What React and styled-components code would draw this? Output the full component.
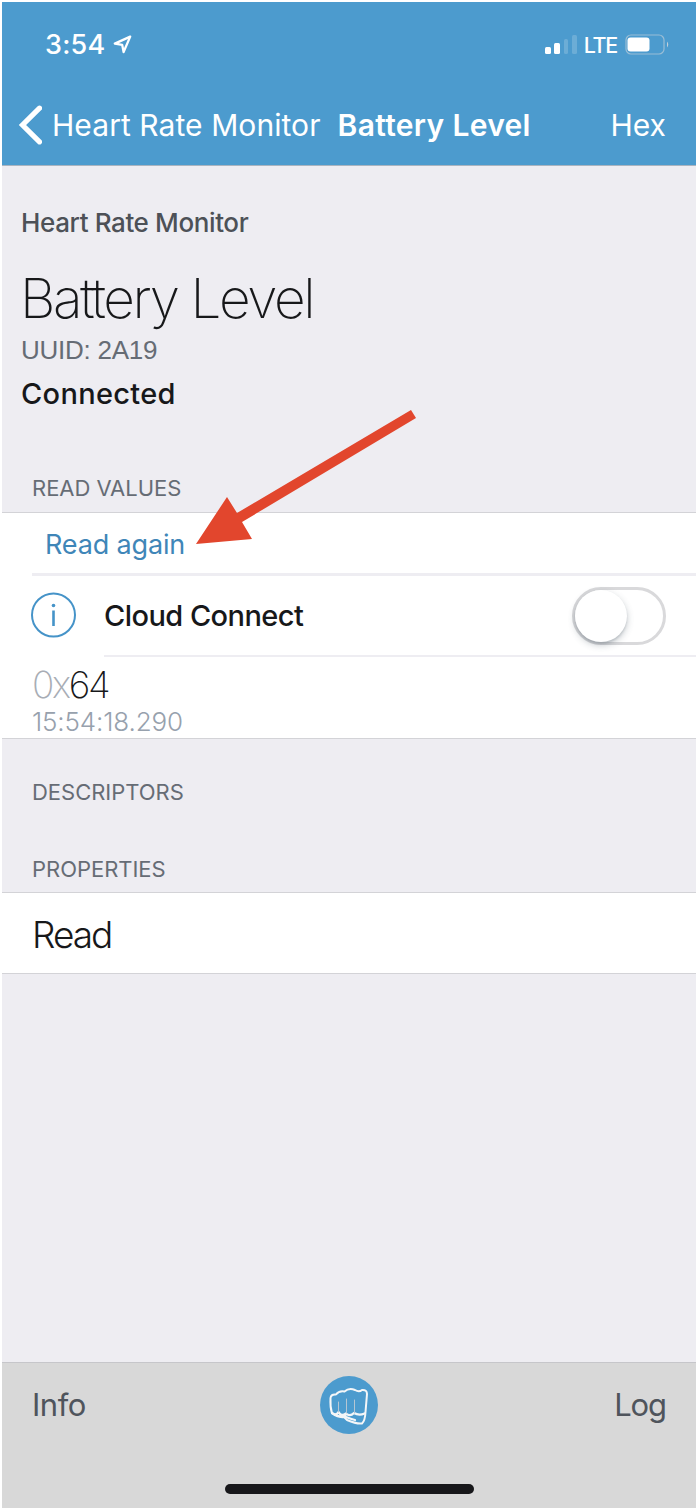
import React from "react";
import styled, { createGlobalStyle } from "styled-components";

const GlobalStyle = createGlobalStyle`
  * { box-sizing: border-box; }
  body { margin: 0; background: #fff; }
`;

const sans = `Inter, "Liberation Sans", sans-serif`;
const grotesk = `"Liberation Sans", Inter, sans-serif`;

const Screen = styled.main`
  position: relative;
  display: flex;
  flex-direction: column;
  width: 694px;
  height: 1506px;
  margin: 2px 0 0 2px;
  background: #eeedf2;
  font-family: ${sans};
  color: #17181a;
`;

const Text = styled.span`
  display: block;
  white-space: pre;
  font-family: ${(p) => p.$font || sans};
  font-size: ${(p) => p.$size}px;
  font-weight: ${(p) => p.$weight || 400};
  letter-spacing: ${(p) => p.$track || 0}px;
  line-height: ${(p) => p.$line || 36}px;
  color: ${(p) => p.$color || "#17181a"};
`;

const Header = styled.header`
  height: 164px;
  flex: none;
  background: #4c9bce;
  border-bottom: 1px solid #a9b4c0;
`;

const StatusBar = styled.div`
  display: flex;
  align-items: center;
  justify-content: space-between;
  height: 85px;
  padding: 0 26px 0 43px;
`;

const StatusGroup = styled.div`
  display: flex;
  align-items: center;
  gap: ${(p) => p.$gap}px;
`;

const NavBar = styled.nav`
  display: flex;
  align-items: center;
  height: 76px;
  padding: 0 30px 0 16px;
`;

const BackButton = styled.a`
  display: flex;
  align-items: center;
  gap: 10px;
  margin-right: 17px;
`;

const NavAction = styled.div`
  margin-left: auto;
`;

const Summary = styled.section`
  height: 290px;
  flex: none;
  padding: 39px 19px 0;
`;

const Title = styled.h1`
  margin: 24px 0 0 -1px;
  font-size: 55px;
  font-weight: 250;
  line-height: 66px;
  letter-spacing: -2.45px;
  white-space: pre;
`;

const SectionLabel = styled.h2`
  height: ${(p) => p.$height}px;
  flex: none;
  display: flex;
  align-items: flex-end;
  margin: 0;
  padding: 0 30px ${(p) => p.$bottom}px;
  font-size: 22px;
  font-weight: 400;
  line-height: 32px;
  letter-spacing: -0.03px;
  color: #666c75;
`;

const List = styled.section`
  flex: none;
  background: #fff;
  border-top: 1px solid #d3d3d7;
  border-bottom: 1px solid #d3d3d7;
`;

const Row = styled.div`
  display: flex;
  align-items: center;
  height: ${(p) => p.$height}px;
  padding: ${(p) => p.$drop || 0}px 30px 0 ${(p) => p.$inset || 30}px;
`;

const Divider = styled.hr`
  height: ${(p) => p.$height}px;
  margin: 0 0 0 ${(p) => p.$inset}px;
  border: 0;
  background: #eeedf2;
`;

const InfoBadge = styled.svg`
  flex: none;
  margin: 0 28px 2px -1px;
`;

const Switch = styled.button`
  width: 94px;
  height: 58px;
  margin: 0 0 0 auto;
  padding: 0;
  border: 3px solid #d9d9db;
  border-radius: 29px;
  background: #fff;
`;

const Knob = styled.span`
  display: block;
  width: 52px;
  height: 52px;
  border-radius: 50%;
  background: #fff;
  box-shadow: 0 3px 7px rgba(60, 75, 90, 0.3), 0 2px 2px rgba(60, 75, 90, 0.15);
`;

const ValueRow = styled.div`
  height: 81px;
  padding: 8px 30px 0;
`;

const Faint = styled.span`
  color: #a8adb5;
`;

const Footer = styled.footer`
  display: flex;
  flex-direction: column;
  justify-content: space-between;
  align-items: center;
  height: 146px;
  margin-top: auto;
  padding-bottom: 14px;
  background: #d8d8d8;
  border-top: 1px solid #c6c6ca;
`;

const Toolbar = styled.div`
  display: grid;
  grid-template-columns: 1fr auto 1fr;
  align-items: center;
  width: 100%;
  height: 84px;
  padding: 0 30px;
`;

const ToolbarEnd = styled.div`
  justify-self: end;
`;

const HomeIndicator = styled.div`
  width: 249px;
  height: 10px;
  border-radius: 5px;
  background: #17171a;
`;

const Pointer = styled.svg`
  position: absolute;
  left: 188px;
  top: 400px;
`;

export default function App() {
  return (
    <>
      <GlobalStyle />
      <Screen>
        <Header>
          <StatusBar>
            <StatusGroup $gap={8}>
              <Text $size={27} $weight={550} $track={0.2} $line={38} $color="#fff">3:54</Text>
              <svg width="19" height="19" viewBox="0 0 19 19" fill="none" stroke="#fff" strokeWidth="2.3" strokeLinejoin="round">
                <path d="M17.2 1.6 L1.8 8.6 L9.2 9.9 L10.6 17 Z" />
              </svg>
            </StatusGroup>
            <StatusGroup $gap={7}>
              <svg width="32" height="20" viewBox="0 0 32 20" fill="#fff">
                <rect x="0" y="12" width="6" height="7" rx="1.5" />
                <rect x="9" y="8" width="6" height="11" rx="1.5" />
                <rect x="19" y="4" width="4" height="15" rx="1.5" opacity="0.18" />
                <rect x="27" y="0" width="5" height="19" rx="1.5" opacity="0.18" />
              </svg>
              <Text $size={21.5} $weight={500} $track={-1.3} $color="#fff">LTE</Text>
              <svg width="46" height="21" viewBox="0 0 46 21">
                <rect x="2" y="1" width="38" height="19" rx="5" fill="none" stroke="#c3cfd9" strokeWidth="1.2" strokeOpacity="0.65" />
                <rect x="3.500" y="3.5" width="22" height="14" rx="3" fill="#fff" />
                <path d="M43 7.5 Q45.5 10.5 43 13.5 Z" fill="#c3cfd9" />
              </svg>
            </StatusGroup>
          </StatusBar>
          <NavBar>
            <BackButton>
              <svg width="24" height="40" viewBox="0 0 24 40" fill="none" stroke="#fff" strokeWidth="5.2" strokeLinecap="round" strokeLinejoin="miter">
                <path d="M21.5 3.200 L4.5 20 L21.5 36.800" />
              </svg>
              <Text $size={30} $track={0.07} $color="#fff">Heart Rate Monitor</Text>
            </BackButton>
            <Text $size={30} $weight={600} $track={0.32} $color="#fff">Battery Level</Text>
            <NavAction>
              <Text $size={30} $color="#fff">Hex</Text>
            </NavAction>
          </NavBar>
        </Header>

        <Summary>
          <Text $size={26} $weight={500} $track={-0.38} $color="#4d5157">Heart Rate Monitor</Text>
          <Title>Battery Level</Title>
          <Text $font={grotesk} $size={26} $track={-0.25} $line={38} $color="#666c75">UUID: 2A19</Text>
          <Text $size={29} $weight={500} $track={0.3} $line={50}>Connected</Text>
        </Summary>

        <SectionLabel $height={56} $bottom={8}>READ VALUES</SectionLabel>
        <List>
          <Row $height={60} $inset={43} $drop={3}>
            <Text $size={27} $track={-0.15} $color="#3f86b8">Read again</Text>
          </Row>
          <Divider $height={3} $inset={30} />
          <Row $height={79} $drop={1}>
            <InfoBadge width="45" height="46" viewBox="0 0 45 46" fill="none" stroke="#4593c8" strokeWidth="2">
              <circle cx="22.5" cy="23" r="21.5" />
              <path d="M22.5 18.5 V34" strokeWidth="2.6" />
              <circle cx="22.5" cy="13.5" r="1.8" fill="#4593c8" stroke="none" />
            </InfoBadge>
            <Text $size={29} $weight={500} $track={-0.55}>Cloud Connect</Text>
            <Switch type="button" role="switch" aria-checked="false">
              <Knob />
            </Switch>
          </Row>
          <Divider $height={2} $inset={102} />
          <ValueRow>
            <Text $size={37} $weight={250} $track={-2.3} $line={40}><Faint>0x</Faint>64</Text>
            <Text $size={26} $weight={350} $track={-0.15} $line={33} $color="#97a1ad">15:54:18.290</Text>
          </ValueRow>
        </List>
        <SectionLabel $height={77} $bottom={8}>DESCRIPTORS</SectionLabel>
        <SectionLabel $height={76} $bottom={7}>PROPERTIES</SectionLabel>
        <List>
          <Row $height={80} $drop={4}>
            <Text $size={37} $weight={300} $track={-2}>Read</Text>
          </Row>
        </List>

        <Footer>
          <Toolbar>
            <Text $size={31} $track={-0.5} $line={38} $color="#4f545c">Info</Text>
            <svg width="58" height="58" viewBox="0 0 58 58" fill="none" stroke="#f4f6f8" strokeLinecap="round" strokeLinejoin="round">
              <circle cx="29" cy="29" r="29" fill="#4c9bce" stroke="none" />
              <path d="M12 37.500 Q10 31 10.500 22 Q11 18 16 18.500 Q19 14.500 24.500 15.500 Q29 11.500 35 14 Q39 16.500 42 14 Q47 13.500 47 18 L45.500 36 Q45 45 42 47.500 Q36 48 27 44 L24 41 Q19 42 12 37.500 Z" strokeWidth="2" />
              <path d="M12.500 37 Q16 40 18.500 36 Q21 41 26 37.500 Q30 41 34 37 Q39 40 44.500 37.500 M17 39.500 Q23 42 26 38.500 M26 41 Q31 43 35 44" strokeWidth="2.300" />
              <path d="M18.500 26 V36 M26.500 23 V37 M34.500 24 V37" stroke="#b5c6d3" strokeWidth="1" />
            </svg>
            <ToolbarEnd>
              <Text $size={31} $track={-1.1} $line={38} $color="#4f545c">Log</Text>
            </ToolbarEnd>
          </Toolbar>
          <HomeIndicator />
        </Footer>

        <Pointer width="232" height="150" viewBox="190 402 232 150" aria-hidden="true">
          <path d="M196 544 L227 497 L237 513 L411 410 L416 418 L242 522 L252 539 Z" fill="#e2462d" />
        </Pointer>
      </Screen>
    </>
  );
}
